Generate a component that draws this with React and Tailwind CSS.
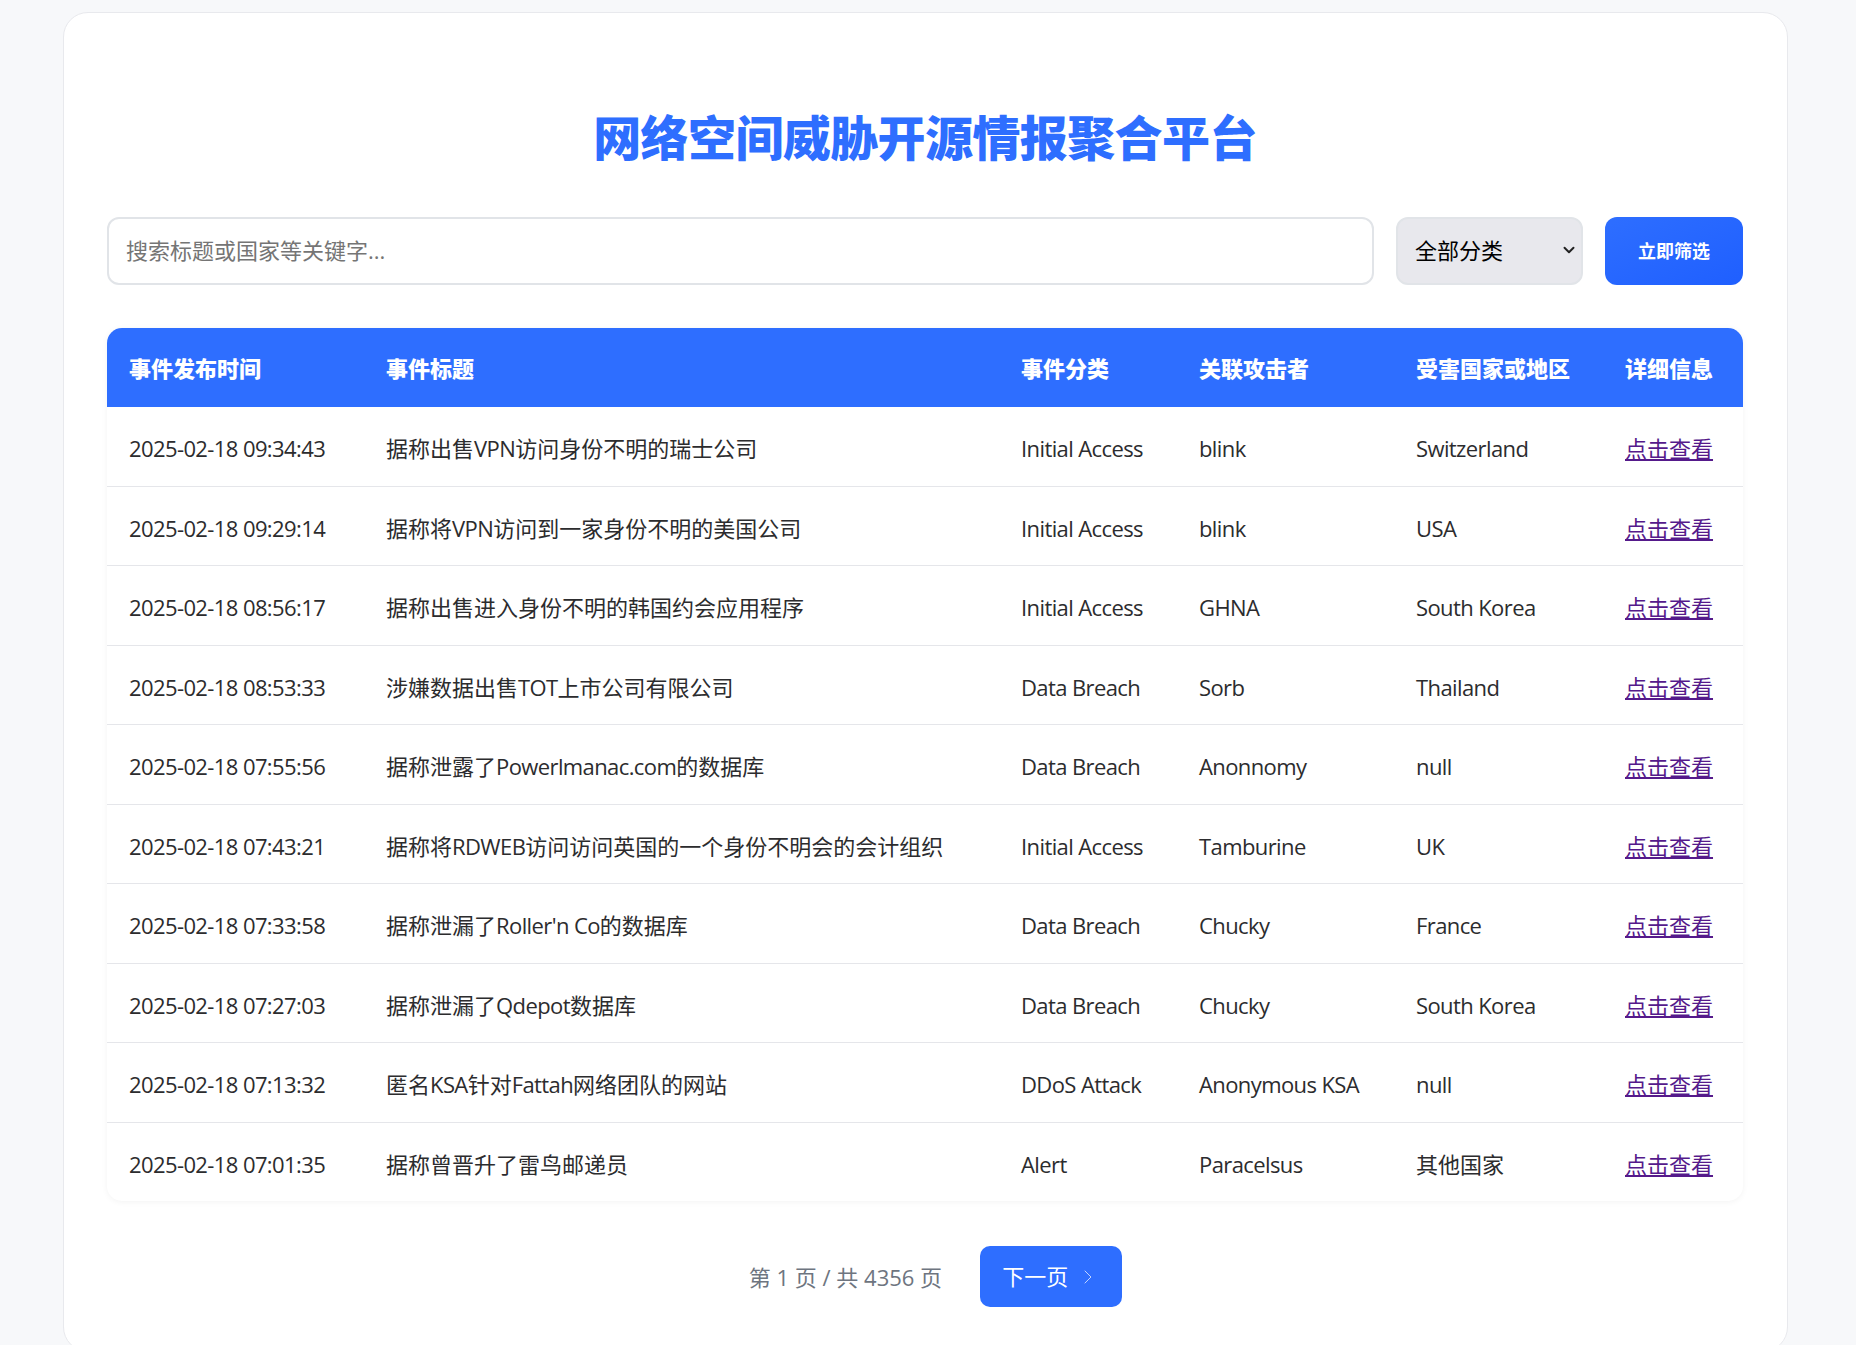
import { ChevronRight, ChevronDown } from 'lucide-react'

const rows = [
  ['2025-02-18 09:34:43', '据称出售VPN访问身份不明的瑞士公司', 'Initial Access', 'blink', 'Switzerland'],
  ['2025-02-18 09:29:14', '据称将VPN访问到一家身份不明的美国公司', 'Initial Access', 'blink', 'USA'],
  ['2025-02-18 08:56:17', '据称出售进入身份不明的韩国约会应用程序', 'Initial Access', 'GHNA', 'South Korea'],
  ['2025-02-18 08:53:33', '涉嫌数据出售TOT上市公司有限公司', 'Data Breach', 'Sorb', 'Thailand'],
  ['2025-02-18 07:55:56', '据称泄露了Powerlmanac.com的数据库', 'Data Breach', 'Anonnomy', 'null'],
  ['2025-02-18 07:43:21', '据称将RDWEB访问访问英国的一个身份不明会的会计组织', 'Initial Access', 'Tamburine', 'UK'],
  ['2025-02-18 07:33:58', "据称泄漏了Roller'n Co的数据库", 'Data Breach', 'Chucky', 'France'],
  ['2025-02-18 07:27:03', '据称泄漏了Qdepot数据库', 'Data Breach', 'Chucky', 'South Korea'],
  ['2025-02-18 07:13:32', '匿名KSA针对Fattah网络团队的网站', 'DDoS Attack', 'Anonymous KSA', 'null'],
  ['2025-02-18 07:01:35', '据称曾晋升了雷鸟邮递员', 'Alert', 'Paracelsus', '其他国家'],
]

// latin runs sit a little tighter than the font's default
function Mixed({ text }) {
  return text.split(/([A-Za-z0-9.':\- ]+)/).map((part, i) =>
    i % 2 ? <span key={i} className="tracking-[-0.6px]">{part}</span> : part
  )
}

export default function App() {
  return (
    <div className="h-screen overflow-hidden bg-[#f7f8fa] pl-[63px] pr-[68px] pt-[12px] font-['Open_Sans','Noto_Sans_CJK_SC',sans-serif] text-[22px] text-[#2c2c2e]">
      <div className="rounded-[25px] border border-[#e8e9ed] bg-white pb-[44px] pl-[43px] pr-[44px] pt-[93px]">
        <h1 className="mb-[47px] text-center text-[48px] font-black leading-[64px] tracking-[-0.6px] text-[#2e6eff]">网络空间威胁开源情报聚合平台</h1>

        <div className="mb-[43px] flex gap-[22px]">
          <input
            type="text"
            placeholder="搜索标题或国家等关键字..."
            className="h-[68px] flex-1 rounded-[12px] border-[2.5px] border-[#e1e4e8] bg-white px-[17px] pb-[2px] text-[22px] outline-none placeholder:text-[#757575]"
          />
          <div className="relative w-[187px]">
            <select className="h-[68px] w-full appearance-none rounded-[12px] border-[2.5px] border-[#e1e4e8] bg-[#e8e8ed] pb-[2px] pl-[17px] text-[22px] text-black outline-none">
              <option>全部分类</option>
            </select>
            <ChevronDown size={18} strokeWidth={2.6} className="pointer-events-none absolute right-[5px] top-[24px] text-[#222]" />
          </div>
          <button className="h-[68px] w-[138px] rounded-[12px] bg-gradient-to-br from-[#2e6eff] to-[#1f5fff] text-[18px] font-bold text-white">立即筛选</button>
        </div>

        <div className="overflow-hidden rounded-[15px] shadow-[0_1px_6px_rgba(0,0,0,0.05)]">
          <table className="w-full table-fixed border-collapse text-left">
            <thead>
              <tr className="bg-[#2e6eff] text-white">
                <th className="w-[257px] px-[22px] pb-[21px] pt-[23px] font-black leading-[35px]">事件发布时间</th>
                <th className="w-[635px] px-[22px] pb-[21px] pt-[23px] font-black leading-[35px]">事件标题</th>
                <th className="w-[178px] px-[22px] pb-[21px] pt-[23px] font-black leading-[35px]">事件分类</th>
                <th className="w-[217px] px-[22px] pb-[21px] pt-[23px] font-black leading-[35px]">关联攻击者</th>
                <th className="w-[209px] px-[22px] pb-[21px] pt-[23px] font-black leading-[35px]">受害国家或地区</th>
                <th className="w-[140px] px-[22px] pb-[21px] pt-[23px] font-black leading-[35px]">详细信息</th>
              </tr>
            </thead>
            <tbody>
              {rows.map((r, i) => (
                <tr key={r[0]} className={i < rows.length - 1 ? 'border-b border-[#e5e6ea]' : ''}>
                  <td className="px-[22px] pb-[20px] pt-[24px] leading-[34.5px]"><Mixed text={r[0]} /></td>
                  <td className="px-[22px] pb-[20px] pt-[24px] leading-[34.5px]"><Mixed text={r[1]} /></td>
                  <td className="px-[22px] pb-[20px] pt-[24px] leading-[34.5px]"><Mixed text={r[2]} /></td>
                  <td className="px-[22px] pb-[20px] pt-[24px] leading-[34.5px]"><Mixed text={r[3]} /></td>
                  <td className="px-[22px] pb-[20px] pt-[24px] leading-[34.5px]"><Mixed text={r[4]} /></td>
                  <td className="px-[22px] pb-[20px] pt-[24px] leading-[34.5px]">
                    <a href="#" className="text-[#551a8b] underline">点击查看</a>
                  </td>
                </tr>
              ))}
            </tbody>
          </table>
        </div>

        <div className="mt-[45px] flex items-center justify-center gap-[38px] pl-[21px]">
          <span className="mt-[2px] text-[#6e7580]">第 1 页 / 共 4356 页</span>
          <button className="flex h-[61px] w-[142px] items-center rounded-[10px] bg-[#2e6eff] pl-[22px] text-white">
            下一页
            <ChevronRight size={24} strokeWidth={1} className="ml-[8px] text-white/70" />
          </button>
        </div>
      </div>
    </div>
  )
}
